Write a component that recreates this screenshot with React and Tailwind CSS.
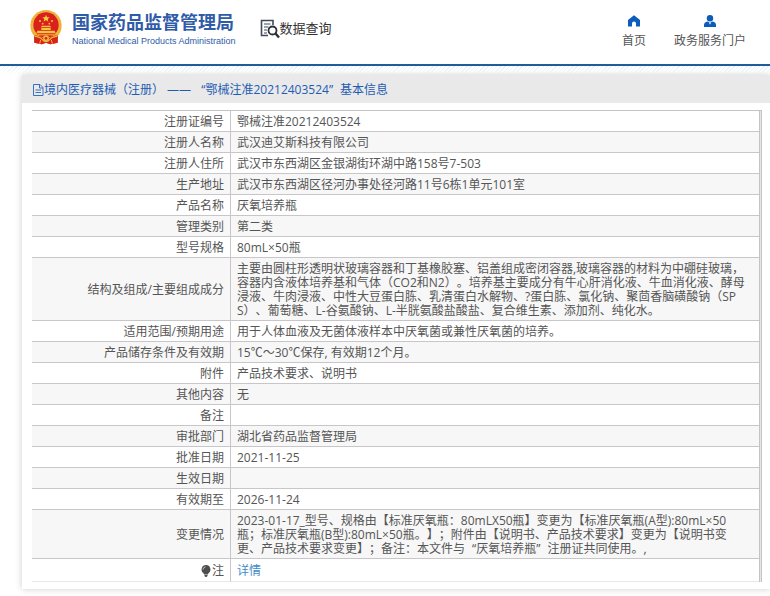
const details = [
  { label: "注册证编号", lines: ["鄂械注准20212403524"] },
  { label: "注册人名称", lines: ["武汉迪艾斯科技有限公司"] },
  { label: "注册人住所", lines: ["武汉市东西湖区金银湖街环湖中路158号7-503"] },
  { label: "生产地址", lines: ["武汉市东西湖区径河办事处径河路11号6栋1单元101室"] },
  { label: "产品名称", lines: ["厌氧培养瓶"] },
  { label: "管理类别", lines: ["第二类"] },
  { label: "型号规格", lines: ["80mL×50瓶"] },
  {
    label: "结构及组成/主要组成成分",
    lines: [
      "主要由圆柱形透明状玻璃容器和丁基橡胶塞、铝盖组成密闭容器,玻璃容器的材料为中硼硅玻璃，",
      "容器内含液体培养基和气体（CO2和N2）。培养基主要成分有牛心肝消化液、牛血消化液、酵母",
      "浸液、牛肉浸液、中性大豆蛋白胨、乳清蛋白水解物、?蛋白胨、氯化钠、聚茴香脑磺酸钠（SP",
      "S）、葡萄糖、L-谷氨酸钠、L-半胱氨酸盐酸盐、复合维生素、添加剂、纯化水。",
    ],
  },
  { label: "适用范围/预期用途", lines: ["用于人体血液及无菌体液样本中厌氧菌或兼性厌氧菌的培养。"] },
  { label: "产品储存条件及有效期", lines: ["15℃～30℃保存, 有效期12个月。"] },
  { label: "附件", lines: ["产品技术要求、说明书"] },
  { label: "其他内容", lines: ["无"] },
  { label: "备注", lines: [""] },
  { label: "审批部门", lines: ["湖北省药品监督管理局"] },
  { label: "批准日期", lines: ["2021-11-25"] },
  { label: "生效日期", lines: [""] },
  { label: "有效期至", lines: ["2026-11-24"] },
  {
    label: "变更情况",
    lines: [
      "2023-01-17_型号、规格由【标准厌氧瓶：80mLX50瓶】变更为【标准厌氧瓶(A型):80mL×50",
      "瓶；标准厌氧瓶(B型):80mL×50瓶。】；附件由【说明书、产品技术要求】变更为【说明书变",
      "更、产品技术要求变更】；备注：本文件与“厌氧培养瓶”注册证共同使用。,",
    ],
  },
];

// Curly quotes are padded out to a full-width cell
const Quoted = ({ text }) =>
  text.split(/([“”])/).map((part, i) => {
    if (part === "“") return <span key={i} className="pl-[7px]">{part}</span>;
    if (part === "”") return <span key={i} className="pr-[7px]">{part}</span>;
    return part;
  });

const Emblem = () => (
  <svg viewBox="0 0 96 105" className="w-8 h-[35px]" aria-hidden="true">
    <path d="M15 70 L13 98 L35 103 L48 98 L61 103 L83 98 L81 70 Z" fill="#d9261c" />
    <circle cx="48" cy="47" r="47" fill="#f0b73d" />
    <circle cx="48" cy="47" r="43" fill="none" stroke="#e8a634" strokeWidth="3" strokeDasharray="5 4" />
    <circle cx="48" cy="45" r="38" fill="#d9201a" />
    <path d="M48 14l3 8h8l-6 5 2 8-7-5-7 5 2-8-6-5h8z" fill="#f8cf45" />
    <g fill="#f5c443">
      <circle cx="30" cy="33" r="3" />
      <circle cx="66" cy="33" r="3" />
      <circle cx="38" cy="41" r="2.5" />
      <circle cx="58" cy="41" r="2.5" />
      <path d="M36 47h24l4 5H32z" />
      <path d="M34 54h28v6H34z" />
      <path d="M22 62h52l3 8H19z" />
      <path d="M24 73h48v3H24z" />
    </g>
    <path d="M12 77 Q30 74 38 84 Q48 76 58 84 Q66 74 84 77 L83 98 L61 103 L48 98 L35 103 L13 98 Z" fill="#d6241b" />
    <circle cx="48" cy="85" r="9" fill="#f0b73d" />
    <circle cx="48" cy="85" r="4" fill="#d9261c" />
    <path d="M14 79 Q28 79 36 88 Q42 95 48 95 Q54 95 60 88 Q68 79 82 79" fill="none" stroke="#efb53b" strokeWidth="3.500" />
    <path d="M32 90l-3 11M64 90l3 11" stroke="#efb53b" strokeWidth="3" />
  </svg>
);

const SearchDocIcon = () => (
  <svg viewBox="0 0 20 20" className="w-5 h-5" fill="none" stroke="#414a5a" aria-hidden="true">
    <path d="M13 6V1.5H1.5v15H8" strokeWidth="1.6" />
    <path d="M4 5h6.500M4 8h4.500M4 11h3M4 14h3" strokeWidth="1.200" />
    <circle cx="12.500" cy="11.500" r="4" stroke="#2c3038" strokeWidth="1.800" />
    <path d="M15.500 14.500l3.500 4" stroke="#2c3038" strokeWidth="2.400" />
  </svg>
);

const HomeIcon = () => (
  <svg viewBox="0 0 12 12" className="w-3 h-3" fill="#0b5cbc" aria-hidden="true">
    <path d="M6 .3 0 5v6.500h4V8.500a2 2 0 0 1 4 0v3h4V5z" />
  </svg>
);

const UserIcon = () => (
  <svg viewBox="0 0 12 12" className="w-3 h-3" fill="#0b5cbc" aria-hidden="true">
    <circle cx="6" cy="3.200" r="3.200" />
    <path d="M0 12V10Q0 7.200 3.500 6.500L5 7h2l1.500-.5Q12 7.200 12 10v2z" />
    <path d="M4.800 7.200h2.400L6 9.800z" fill="#fff" />
  </svg>
);

const FileIcon = () => (
  <svg viewBox="0 0 11 12" className="w-[11px] h-3" fill="none" stroke="#3a72c2" aria-hidden="true">
    <path d="M.5 .5h6.500l3 3v8H.5zM6.500 .5v3.500h3.500M2.500 6h5.500M2.500 8.500h5.500" />
  </svg>
);

const BulbIcon = () => (
  <svg viewBox="0 0 10 12" className="w-[10px] h-3" fill="#4d4d4d" aria-hidden="true">
    <path d="M5 0a4.500 4.500 0 0 0-2.500 8.200L3.200 9.500h3.600l.7-1.300A4.500 4.500 0 0 0 5 0zM3.500 10h3v1L5.500 12h-1l-1-1z" />
    <path d="M2 4.500A3 3 0 0 1 4.500 1.800" fill="none" stroke="#ddd" strokeWidth=".8" />
  </svg>
);

const Header = () => (
  <header className="h-[66px] border-b-2 border-[#1f5c9c] flex justify-between">
    <div className="flex gap-6 pl-[30px]">
      <a href="#" className="flex pt-[10px] gap-[10px] text-[#2f5ba8]">
        <Emblem />
        <div>
          <div className="text-lg leading-6 font-bold">国家药品监督管理局</div>
          <div className="font-['Liberation_Sans',sans-serif] text-[9px] leading-[14px]">
            National Medical Products Administration
          </div>
        </div>
      </a>
      <a href="#" className="flex items-center h-[58px] text-[13px] text-[#333]">
        <SearchDocIcon />
        数据查询
      </a>
    </div>
    <nav className="flex gap-7 pt-[15px] pr-6 text-xs leading-4 text-[#555]">
      <a href="#" className="flex flex-col items-center gap-[6px]">
        <HomeIcon />
        首页
      </a>
      <a href="#" className="flex flex-col items-center gap-[6px]">
        <UserIcon />
        政务服务门户
      </a>
    </nav>
  </header>
);

const DetailTable = () => (
  <div className="border-t border-r border-[#c4c4c7] bg-[#e6e6e8] pr-px">
    <table className="w-full border-separate border-spacing-0 border-r border-[#c4c4c7] bg-white">
      <tbody>
        {details.map((item) => (
          <tr key={item.label} className="even:bg-[#f7f7f7]">
            <th
              scope="row"
              className="w-[199px] h-[21px] border-b border-r border-[#c9c6ca] pt-1 pb-[2px] pr-[6px] text-right font-normal whitespace-nowrap"
            >
              {item.label}
            </th>
            <td className="border-b border-[#c9c6ca] pt-1 pb-[2px] pl-[6px] whitespace-nowrap">
              {item.lines.map((line) => (
                <div key={line}>
                  <Quoted text={line} />
                </div>
              ))}
            </td>
          </tr>
        ))}
        <tr>
          <th
            scope="row"
            className="h-[23px] border-b border-r border-b-[#e8e8e8] border-r-[#c9c6ca] pt-1 pb-[2px] pr-[6px] font-normal"
          >
            <span className="flex items-center justify-end gap-px">
              <BulbIcon />注
            </span>
          </th>
          <td className="border-b border-[#e8e8e8] pt-1 pb-[2px] pl-[6px]">
            <a href="#" className="text-[#428bca]">
              详情
            </a>
          </td>
        </tr>
      </tbody>
    </table>
  </div>
);

const App = () => {
  return (
    <div className="min-h-screen overflow-x-hidden bg-white font-['Open_Sans','Noto_Sans_CJK_SC',sans-serif] text-[#555] [text-spacing-trim:space-all]">
      <Header />
      <div className="h-[9px] bg-[repeating-linear-gradient(135deg,#e3f1fa_0px,#e3f1fa_1px,#ffffff_1px,#ffffff_3px)] [mask-image:linear-gradient(#000,transparent)]" />
      <main className="ml-[22px] bg-white shadow-[0_0_7px_rgba(0,0,0,0.2)]">
        <h1 className="flex items-center h-7 pt-[2px] pl-[11px] bg-[#e9e9e9] text-xs text-[#1e5cb3] whitespace-pre">
          <FileIcon />
          <span>
            <Quoted text="境内医疗器械（注册） —— “鄂械注准20212403524”基本信息" />
          </span>
        </h1>
        <div className="pt-[7px] pb-[7px] pl-[10px] pr-2 text-xs leading-[14px]">
          <DetailTable />
        </div>
      </main>
    </div>
  );
};

export default App;
